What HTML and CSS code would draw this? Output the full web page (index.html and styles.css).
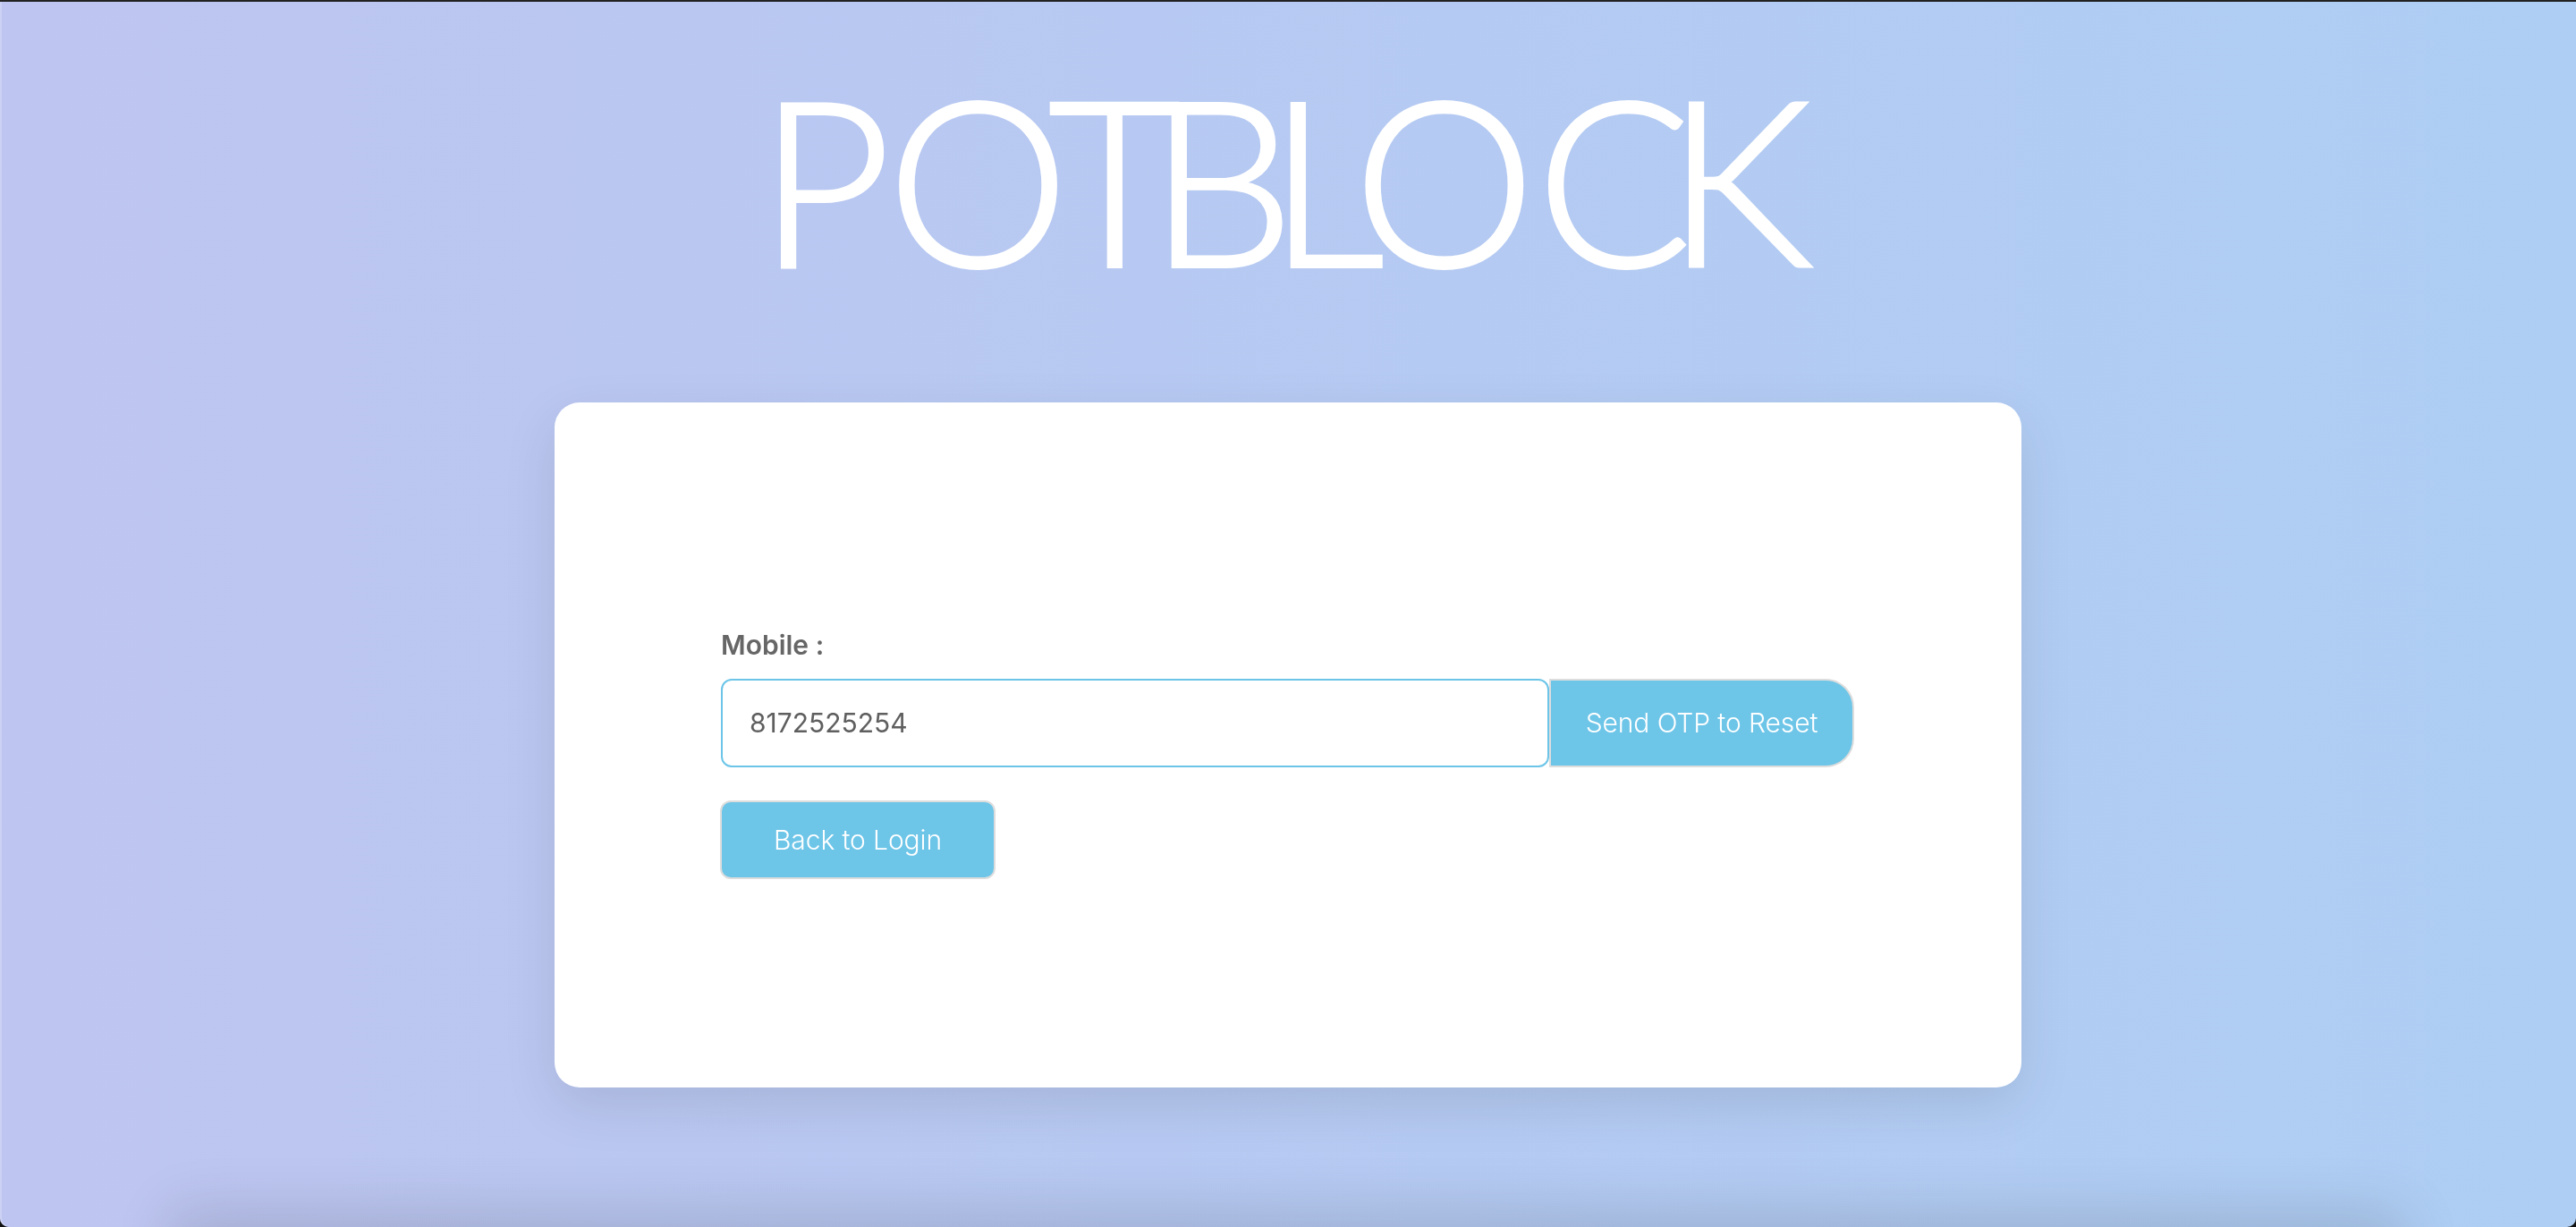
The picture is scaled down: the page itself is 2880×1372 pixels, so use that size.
FILE: index.html
```html
<!DOCTYPE html>
<html lang="en">
<head>
    <meta charset="UTF-8">
    <title>Potblock - Reset Password</title>
    <link rel="stylesheet" href="styles.css">
</head>
<body>
    <div class="page">
        <h1 class="logo"><span class="kern-p">P</span><span class="kern-o1">O</span><span class="kern-t">T</span><span class="kern-b">B</span><span class="kern-l">L</span><span class="kern-o2">O</span><span class="kern-c">C</span>K</h1>

        <div class="card">
            <label class="field-label" for="mobile">Mobile :</label>
            <div class="input-group">
                <input class="field-input" id="mobile" type="text" value="8172525254">
                <button class="btn btn-append" type="button">Send OTP to Reset</button>
            </div>
            <button class="btn btn-back" type="button">Back to Login</button>
        </div>

        <div class="next-card"></div>
    </div>
</body>
</html>
```

FILE: styles.css
```css
html, body {
    height: 100%;
    margin: 0;
    background-color: #111;
}
.page {
    box-sizing: border-box;
    height: 1372px;
    overflow: hidden;
    display: flex;
    flex-direction: column;
    align-items: center;
    border-top: 2px solid #222;
    border-radius: 0 0 10px 10px;
    background: linear-gradient(to right, #bec5f0, #aecef4);
    box-shadow: inset 2px 0 0 #ccd2f4;
    font-family: Inter, "Open Sans", sans-serif;
}
.logo {
    flex: none;
    height: 448px;
    margin: 0;
    padding-right: 25px;
    font-family: Lato, sans-serif;
    font-size: 256px;
    font-weight: 300;
    line-height: 394px;
    letter-spacing: -19px;
    color: #fff;
    -webkit-text-stroke: 4px #fff;
}
.kern-p { letter-spacing: -4px; }
.kern-o1 { letter-spacing: -23px; }
.kern-t { letter-spacing: -35px; }
.kern-b { letter-spacing: -29px; }
.kern-l { letter-spacing: -34px; }
.kern-o2 { letter-spacing: 2px; }
.kern-c { letter-spacing: -28px; }
.card {
    flex: none;
    box-sizing: border-box;
    width: 1640px;
    height: 766px;
    display: flex;
    flex-direction: column;
    justify-content: center;
    align-items: flex-start;
    padding: 19px 186px 0;
    background-color: #fff;
    border-radius: 28px;
    box-shadow: 0 20px 60px rgba(0, 0, 0, 0.1);
    will-change: transform;
}
.field-label {
    font-size: 30px;
    font-weight: 600;
    line-height: 36px;
    color: #666;
    margin-bottom: 20px;
}
.input-group {
    display: flex;
    width: 100%;
    height: 99px;
    margin-bottom: 37px;
}
.field-input {
    box-sizing: border-box;
    width: 926px;
    padding: 0 30px;
    border: 2px solid #6cc5e8;
    border-radius: 12px;
    outline: none;
    font-family: inherit;
    font-size: 30px;
    color: #5f5f5f;
}
.btn {
    box-sizing: border-box;
    border: 2px solid #ddd;
    background-color: #6dc5e8;
    font-family: inherit;
    font-size: 30px;
    font-weight: 300;
    letter-spacing: -0.1px;
    color: #fff;
}
.btn-append {
    width: 341px;
    border-radius: 0 32px 32px 0;
}
.btn-back {
    width: 308px;
    height: 88px;
    margin-left: -1px;
    border-radius: 12px;
}
.next-card {
    flex: none;
    width: 2500px;
    height: 400px;
    margin-top: 156px;
    box-shadow: 0 -20px 60px rgba(0, 0, 0, 0.12);
}
```
